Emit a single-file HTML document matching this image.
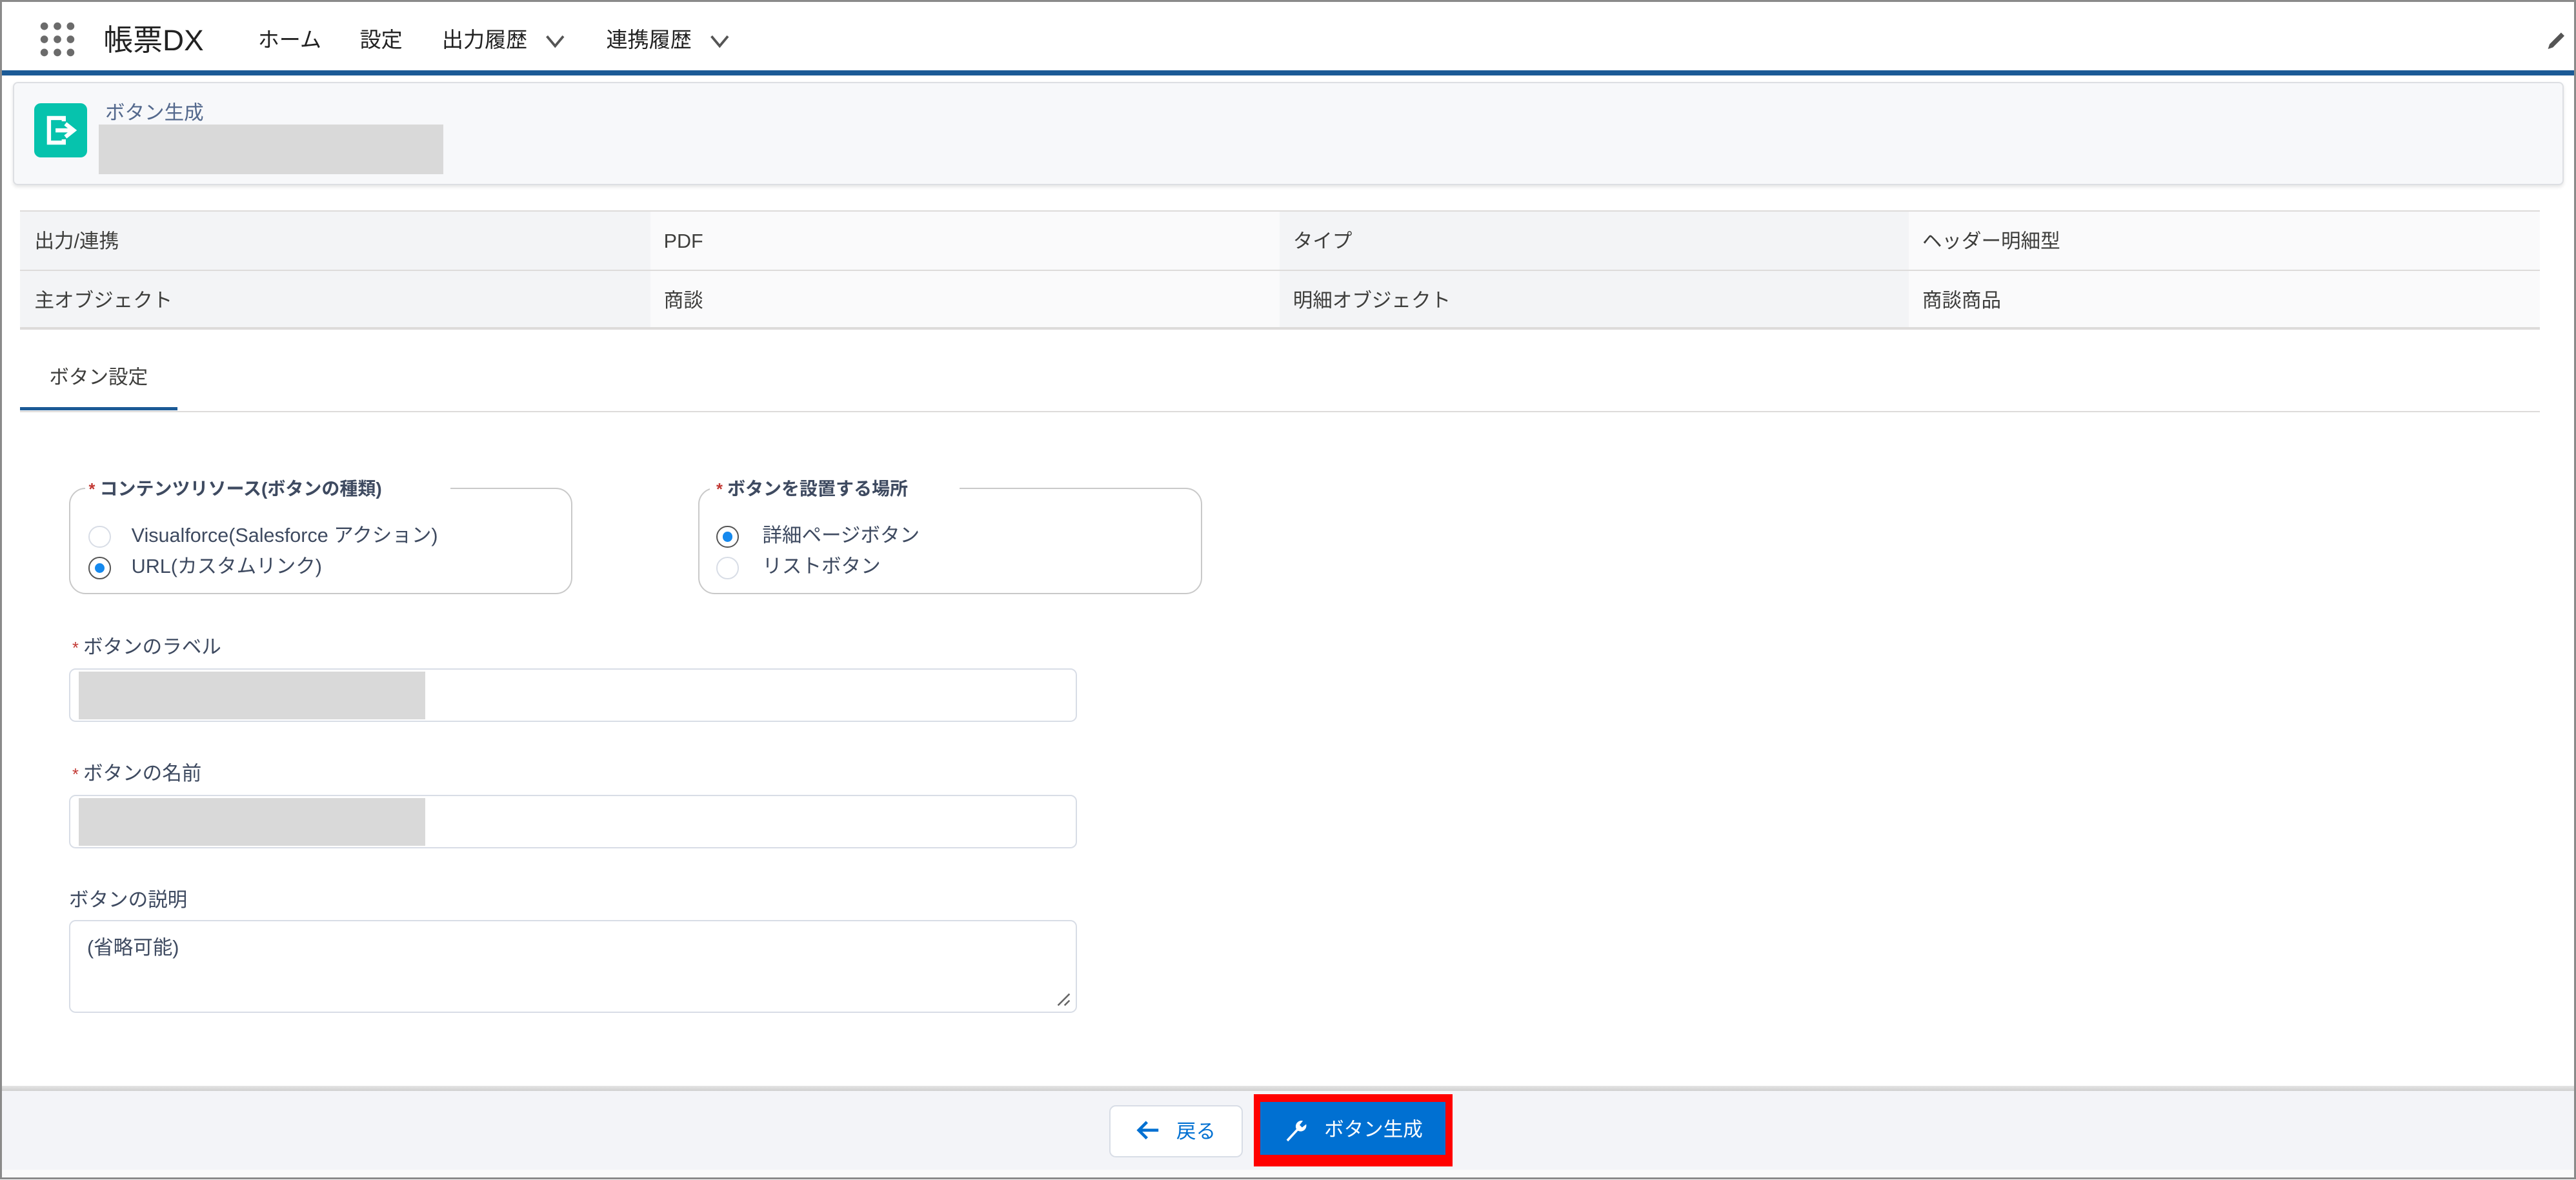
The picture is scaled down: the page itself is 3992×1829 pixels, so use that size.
<!DOCTYPE html>
<html><head><meta charset="utf-8"><style>
html,body{margin:0;padding:0;width:3992px;height:1829px;overflow:hidden;background:#fff;}
#w{zoom:2.546;width:1568px;height:718px;position:relative;font-family:"Liberation Sans","Noto Sans CJK JP",sans-serif;color:#3e3e3c;line-height:16px;}
.a{position:absolute;}
.t{position:absolute;white-space:nowrap;line-height:16px;}
.lbl{font-size:12px;color:#3e4a60;}
.req{color:#c23934;font-size:10px;}
.inp{position:absolute;background:#fff;border:1px solid #d8dde6;border-radius:4px;}
.ph{position:absolute;background:#d9d9d9;}
.radio{position:absolute;width:12px;height:12px;border:1px solid #d8dde6;border-radius:50%;background:#fff;}
.radio.on{border-color:#555;}
.radio.on:after{content:"";position:absolute;left:3px;top:3px;width:6px;height:6px;border-radius:50%;background:#1589ee;}
</style></head><body><div id="w">
<!-- header -->
<div class="a" style="left:0;top:0;width:1568px;height:43px;background:#fff"></div>
<div class="a" style="left:0;top:43px;width:1568px;height:3px;background:#1b5a96"></div>
<svg class="a" style="left:24px;top:13px" width="22" height="22" viewBox="0 0 22 22" fill="#6b6b6b">
<circle cx="3" cy="3" r="2.3"/><circle cx="11" cy="3" r="2.3"/><circle cx="19" cy="3" r="2.3"/>
<circle cx="3" cy="11" r="2.3"/><circle cx="11" cy="11" r="2.3"/><circle cx="19" cy="11" r="2.3"/>
<circle cx="3" cy="19" r="2.3"/><circle cx="11" cy="19" r="2.3"/><circle cx="19" cy="19" r="2.3"/></svg>
<div class="t" style="left:63px;top:15px;font-size:18px;line-height:20px;color:#222">帳票DX</div>
<div class="t" style="left:157px;top:17px;font-size:13px;color:#222">ホーム</div>
<div class="t" style="left:219px;top:17px;font-size:13px;color:#222">設定</div>
<div class="t" style="left:269px;top:17px;font-size:13px;color:#222">出力履歴</div>
<svg class="a" style="left:332px;top:20px" width="12" height="10"><path d="M1 2 L6 8 L11 2" stroke="#555" stroke-width="1.5" fill="none"/></svg>
<div class="t" style="left:369px;top:17px;font-size:13px;color:#222">連携履歴</div>
<svg class="a" style="left:432px;top:20px" width="12" height="10"><path d="M1 2 L6 8 L11 2" stroke="#555" stroke-width="1.5" fill="none"/></svg>
<svg class="a" style="left:1550px;top:19px" width="12" height="12"><path d="M1 11 L2 8 L9 1 L11 3 L4 10 Z" fill="#555"/></svg>
<!-- page header -->
<div class="a" style="left:8px;top:50px;width:1551px;height:61px;background:#f7f8fa;border:1px solid #dddfe3;border-radius:3px;box-shadow:0 1px 2px rgba(0,0,0,.1)"></div>
<div class="a" style="left:21px;top:63px;width:32px;height:33px;background:#06c3ad;border-radius:4px"></div>
<svg class="a" style="left:21px;top:63px" width="32" height="33"><path d="M18 11 V9 H9 V24 H18 V22" stroke="#fff" stroke-width="2.5" fill="none"/><path d="M13 16.5 H22 M19 12.5 L24 16.5 L19 20.5" stroke="#fff" stroke-width="2.5" fill="none"/></svg>
<div class="t" style="left:64px;top:61px;font-size:12px;color:#54698d">ボタン生成</div>
<div class="ph" style="left:60px;top:76px;width:210px;height:30px"></div>
<!-- info table -->
<div class="a" style="left:12px;top:128px;width:1534px;height:71px;border-top:1px solid #dddbda;border-bottom:1px solid #dddbda"></div>
<div class="a" style="left:12px;top:129px;width:384px;height:71px;background:#f3f4f6"></div>
<div class="a" style="left:779px;top:129px;width:383px;height:71px;background:#f3f4f6"></div>
<div class="a" style="left:396px;top:129px;width:383px;height:71px;background:#fafafb"></div>
<div class="a" style="left:1162px;top:129px;width:384px;height:71px;background:#fafafb"></div>
<div class="a" style="left:12px;top:164px;width:1534px;height:1px;background:#dddbda"></div>
<div class="a" style="left:12px;top:199px;width:1534px;height:1px;background:#dddbda"></div>
<div class="t" style="left:21px;top:139px;font-size:12px">出力/連携</div>
<div class="t" style="left:404px;top:139px;font-size:12px">PDF</div>
<div class="t" style="left:787px;top:139px;font-size:12px">タイプ</div>
<div class="t" style="left:1170px;top:139px;font-size:12px">ヘッダー明細型</div>
<div class="t" style="left:21px;top:175px;font-size:12px">主オブジェクト</div>
<div class="t" style="left:404px;top:175px;font-size:12px">商談</div>
<div class="t" style="left:787px;top:175px;font-size:12px">明細オブジェクト</div>
<div class="t" style="left:1170px;top:175px;font-size:12px">商談商品</div>
<!-- tab -->
<div class="t" style="left:30px;top:222px;font-size:12px;color:#3e3e3c">ボタン設定</div>
<div class="a" style="left:12px;top:250px;width:1534px;height:1px;background:#dddbda"></div>
<div class="a" style="left:12px;top:248px;width:96px;height:2px;background:#1b5a96"></div>
<!-- fieldsets -->
<div class="a" style="left:42px;top:297px;width:305px;height:63px;border:1px solid #c9c9c9;border-radius:10px"></div>
<div class="a" style="left:52px;top:289px;width:222px;height:16px;background:#fff"></div>
<div class="t" style="left:54px;top:290px;font-size:11px;font-weight:600;color:#3e4a60"><span class="req">* </span>コンテンツリソース(ボタンの種類)</div>
<div class="radio" style="left:54px;top:320px"></div>
<div class="t lbl" style="left:80px;top:318px;">Visualforce(Salesforce アクション)</div>
<div class="radio on" style="left:54px;top:339px"></div>
<div class="t lbl" style="left:80px;top:337px;">URL(カスタムリンク)</div>
<div class="a" style="left:425px;top:297px;width:305px;height:63px;border:1px solid #c9c9c9;border-radius:10px"></div>
<div class="a" style="left:432px;top:289px;width:152px;height:16px;background:#fff"></div>
<div class="t" style="left:436px;top:290px;font-size:11px;font-weight:600;color:#3e4a60"><span class="req">* </span>ボタンを設置する場所</div>
<div class="radio on" style="left:436px;top:320px"></div>
<div class="t lbl" style="left:464px;top:318px;">詳細ページボタン</div>
<div class="radio" style="left:436px;top:339px"></div>
<div class="t lbl" style="left:464px;top:337px;">リストボタン</div>
<!-- inputs -->
<div class="t lbl" style="left:44px;top:386px;"><span class="req">* </span>ボタンのラベル</div>
<div class="inp" style="left:42px;top:407px;width:612px;height:31px"></div>
<div class="ph" style="left:48px;top:409px;width:211px;height:29px"></div>
<div class="t lbl" style="left:44px;top:463px;"><span class="req">* </span>ボタンの名前</div>
<div class="inp" style="left:42px;top:484px;width:612px;height:31px"></div>
<div class="ph" style="left:48px;top:486px;width:211px;height:29px"></div>
<div class="t lbl" style="left:42px;top:540px;">ボタンの説明</div>
<div class="inp" style="left:42px;top:560px;width:612px;height:55px"></div>
<div class="t" style="left:53px;top:569px;font-size:12px;color:#3e4a60">(省略可能)</div>
<svg class="a" style="left:643px;top:604px" width="9" height="9"><path d="M1 8 L8 1 M5 8 L8 5" stroke="#666" stroke-width="1"/></svg>
<!-- footer -->
<div class="a" style="left:0;top:661px;width:1568px;height:3px;background:linear-gradient(#e4e4e4,#d0d0d0)"></div>
<div class="a" style="left:0;top:664px;width:1568px;height:48px;background:#f3f4f8"></div>
<div class="a" style="left:0;top:712px;width:1568px;height:4px;background:#fafafa"></div>
<div class="a" style="left:675px;top:673px;width:80px;height:30px;background:#fff;border:1px solid #d8dde6;border-radius:4px"></div>
<svg class="a" style="left:690px;top:681px" width="16" height="14"><path d="M15 7 H3 M8 2 L3 7 L8 12" stroke="#0070d2" stroke-width="1.8" fill="none"/></svg>
<div class="t" style="left:716px;top:681px;font-size:12px;color:#0070d2">戻る</div>
<div class="a" style="left:763px;top:666px;width:121px;height:44px;background:#f00"></div>
<div class="a" style="left:767px;top:671px;width:113px;height:32px;background:#0070d2"></div>
<svg class="a" style="left:780px;top:680px" width="16" height="16"><path d="M3 14 L9 7.5 A3.5 3.5 0 0 1 13 2.5 L11 5 L12.5 6.5 L15 4.5 A3.5 3.5 0 0 1 10 8.5 L4 15 Z" fill="#fff"/></svg>
<div class="t" style="left:806px;top:680px;font-size:12px;color:#fff">ボタン生成</div>
<!-- outer border overlay -->
<div class="a" style="left:0;top:0;width:1568px;height:718px;box-sizing:border-box;border:1.5px solid #8a8a8a;pointer-events:none"></div>
</div></body></html>
